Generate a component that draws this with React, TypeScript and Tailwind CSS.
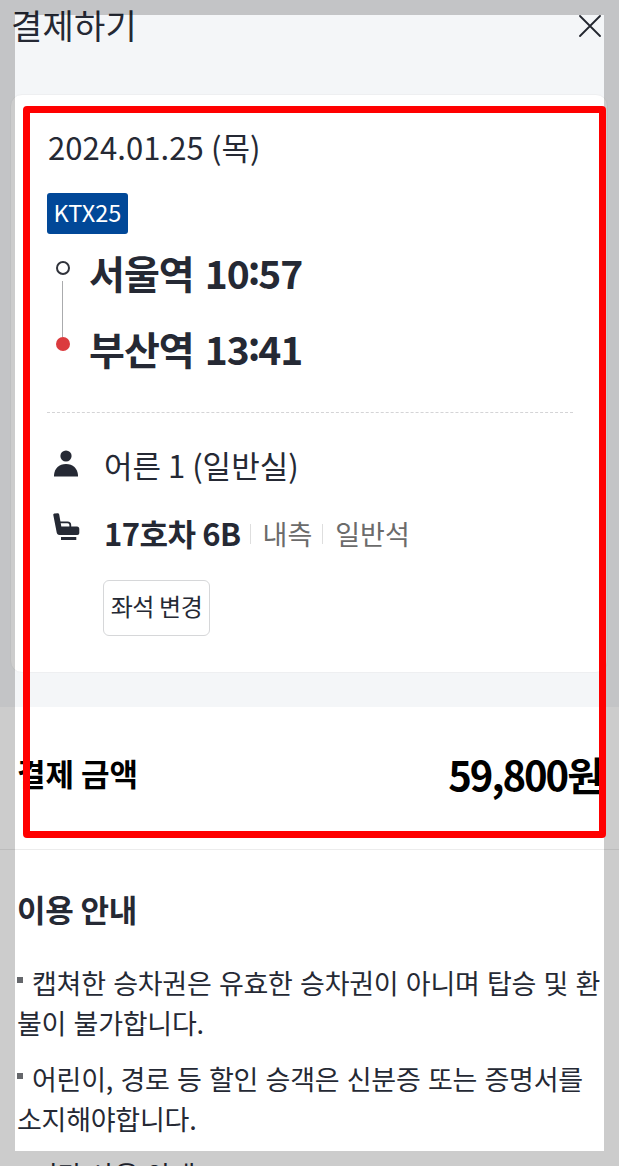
interface Stop {
  station: string
  hour: string
  minute: string
}

const stops: Stop[] = [
  { station: '서울역', hour: '10', minute: '57' },
  { station: '부산역', hour: '13', minute: '41' },
]

const notices = [
  ['캡쳐한 승차권은 유효한 승차권이 아니며 탑승 및 환', '불이 불가합니다.'],
  ['어린이, 경로 등 할인 승객은 신분증 또는 증명서를', '소지해야합니다.'],
]

function Header() {
  return (
    <header className="flex h-[94px] items-start justify-between pl-[11px] pr-[18px]">
      <h1 className="text-[34px] leading-[50px] tracking-[0.2px]">결제하기</h1>
      <button aria-label="닫기" className="mt-[15px]">
        <svg width="22" height="22" viewBox="0 0 22 22" fill="none" stroke="#23262f" strokeWidth="1.8" strokeLinecap="round">
          <path d="M1 1L21 21M21 1L1 21" />
        </svg>
      </button>
    </header>
  )
}

function PersonIcon() {
  return (
    <svg width="24" height="27" viewBox="0 0 24 27" fill="#252934">
      <circle cx="12" cy="6" r="5.6" />
      <path d="M0 26.500V25C0.500 18.500 5 14 12 14s11.500 4.500 12 11v1.500z" />
    </svg>
  )
}

function SeatIcon() {
  return (
    <svg width="27" height="28" viewBox="0 0 27 28" fill="#252934">
      <path d="M0.300 2C0.200 0.800 0.800 0.500 1.800 0.400L4.500 0.200C5.500 0.100 6 0.700 6.200 1.600L8.300 13.600H24C25.500 13.600 26.300 14.600 26.300 16V20C26.300 21.300 25.500 22 24.300 22H6.500C4.800 22 4 21 3.700 19.500z" />
      <path d="M7 9.300H14.500C16.500 9.300 17.300 10.300 17.300 12V14.500" fill="none" stroke="#252934" strokeWidth="1.8" />
      <path d="M8 24H23.300V27H8z" />
    </svg>
  )
}

function Route() {
  return (
    <div className="flex">
      <div className="flex w-[42px] flex-col items-center pr-[11px] pt-[27px]">
        <span className="size-[14px] shrink-0 rounded-full border-2 border-[#30333b]" />
        <span className="mt-[6px] h-[56px] w-px bg-[#aaabad]" />
        <span className="size-[14px] shrink-0 rounded-full bg-[#db3b3e]" />
      </div>
      <ul>
        {stops.map((stop) => (
          <li
            key={stop.station}
            className="flex h-[76px] gap-[11px] whitespace-nowrap text-[39px] leading-[76px] font-bold tracking-[-1px]"
          >
            <span>{stop.station}</span>
            <span>
              {stop.hour}
              <span className="relative -top-[4px] mx-[-1px]">:</span>
              {stop.minute}
            </span>
          </li>
        ))}
      </ul>
    </div>
  )
}

function TicketCard() {
  return (
    <section className="mr-[11px] ml-[10px] h-[579px] rounded-[12px] border border-[#eeeff1] bg-white px-[36px] pt-[28px]">
      <p className="pl-px text-[31px] leading-[48px] tracking-[0.1px]">2024.01.25 (목)</p>
      <div className="mt-[22px] flex h-[41px] w-[81px] items-center justify-center rounded-[3px] bg-[#014898] pb-[2px] text-[23.5px] text-white">
        KTX25
      </div>
      <Route />
      <div className="mt-[26px] -mr-[2px] border-t border-dashed border-[#d4d4d6]" />
      <div className="mt-[32px] flex h-[40px] items-center">
        <div className="w-[57px] self-start pt-[5px] pl-[7px]">
          <PersonIcon />
        </div>
        <p className="text-[31px]">어른 1 (일반실)</p>
      </div>
      <div className="mt-[28px] flex h-[41px] items-center whitespace-nowrap">
        <div className="w-[57px] self-start pl-[6px]">
          <SeatIcon />
        </div>
        <strong className="text-[31px] font-bold tracking-[-0.5px]">17호차 6B</strong>
        <span className="mt-px ml-[9px] h-[20px] w-px bg-[#dedede]" />
        <span className="mt-px ml-[12px] text-[27px] text-[#6b6b6b]">내측</span>
        <span className="mt-px ml-[10px] h-[20px] w-px bg-[#dedede]" />
        <span className="mt-px ml-[12px] text-[27px] text-[#6b6b6b]">일반석</span>
      </div>
      <button className="mt-[26px] ml-[56px] h-[56px] w-[107px] rounded-[6px] border border-[#d6d7d9] pb-[4px] text-[24px] tracking-[-0.4px] whitespace-nowrap">
        좌석 변경
      </button>
    </section>
  )
}

function Payment() {
  return (
    <section className="flex h-[143px] items-center justify-between border-b border-[#ececec] pr-[17px] pb-[9px] pl-[17px] font-bold text-black">
      <h2 className="text-[31px]">결제 금액</h2>
      <p className="text-[40px] tracking-[-2px]">59,800원</p>
    </section>
  )
}

function Guide() {
  return (
    <section className="pl-[17px]">
      <h2 className="pt-[35px] text-[31px] leading-[48px] font-bold tracking-[-0.2px]">이용 안내</h2>
      <ul className="mt-[30px] whitespace-nowrap text-[27px] leading-[40px] tracking-[-0.25px] [word-spacing:1.6px]">
        {notices.map(([first, second]) => (
          <li key={first} className="mb-[16px]">
            <div className="flex items-center">
              <span className="mr-[9px] mb-[7px] size-[6px] bg-[#65676b]" />
              {first}
            </div>
            <div>{second}</div>
          </li>
        ))}
        <li className="pl-[16px]">기타 사용 안내</li>
      </ul>
    </section>
  )
}

export default function App() {
  return (
    <main className="relative h-[1166px] w-[619px] overflow-hidden bg-white font-['Noto_Sans_CJK_KR',sans-serif] text-[#252934]">
      <div className="h-[707px] bg-[#f4f6f8]">
        <Header />
        <TicketCard />
      </div>
      <Payment />
      <Guide />
      {/* dimmed frame */}
      <div className="pointer-events-none absolute inset-0 border-[15px] border-black/20" />
      {/* highlighted area */}
      <div className="pointer-events-none absolute top-[106px] left-[23px] h-[732px] w-[583px] rounded-[4px] border-[7px] border-[#ff0000]" />
    </main>
  )
}
